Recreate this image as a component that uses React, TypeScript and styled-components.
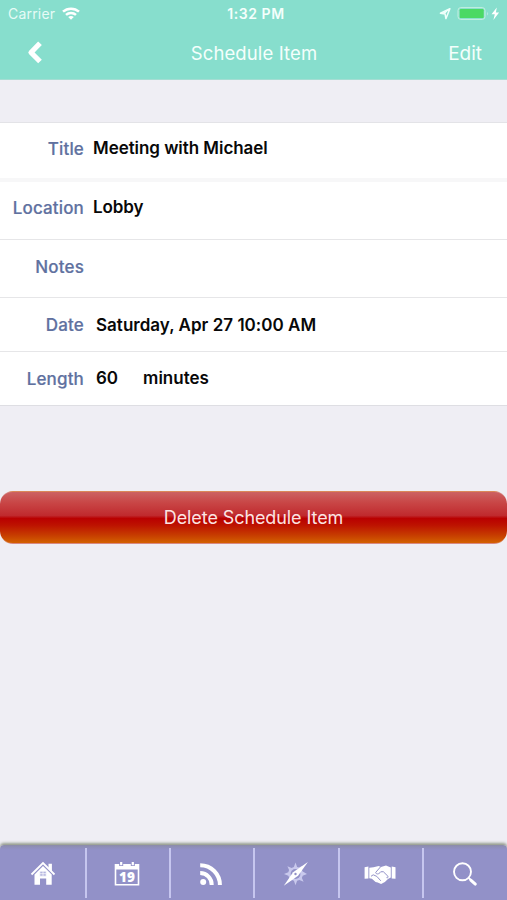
import React from "react";
import styled, { createGlobalStyle } from "styled-components";

const GlobalStyle = createGlobalStyle`
  * { box-sizing: border-box; }
  body { margin: 0; background: #efeef4; }
`;

const Screen = styled.div`
  width: 507px;
  height: 900px;
  display: flex;
  flex-direction: column;
  overflow: hidden;
  background: #efeef4;
  font-family: Inter, "Liberation Sans", sans-serif;
`;

const Header = styled.header`
  height: 80px;
  flex: none;
  background: #87decd;
  color: #f4fffc;
  border-bottom: 1px solid #a5ddd3;
`;

const StatusBar = styled.div`
  height: 27px;
  display: grid;
  grid-template-columns: 1fr auto 1fr;
  align-items: center;
  padding: 0 3px 0 8px;
`;

const Carrier = styled.div`
  display: flex;
  align-items: center;
  gap: 7px;
  font-size: 14px;
  letter-spacing: 0.2px;
  color: #e6fbf6;
`;

const Clock = styled.div`
  font-size: 14px;
  font-weight: 600;
  letter-spacing: 0.55px;
`;

const StatusIcons = styled.div`
  display: flex;
  justify-content: flex-end;
  align-items: center;
`;

const NavBar = styled.div`
  height: 51px;
  display: grid;
  grid-template-columns: 100px 1fr 100px;
  align-items: center;
`;

const BackButton = styled.button`
  border: 0;
  background: none;
  padding: 0 0 0 27px;
  display: flex;
`;

const NavTitle = styled.h1`
  margin: 0 0 0 1px;
  text-align: center;
  font-size: 18.5px;
  font-weight: 400;
  letter-spacing: 0.12px;
`;

const EditButton = styled.button`
  border: 0;
  background: none;
  padding: 2px 25px 0 0;
  text-align: right;
  color: inherit;
  font: inherit;
  font-size: 19px;
`;

const Form = styled.dl`
  margin: 42px 0 0;
  background: #fff;
  border-top: 1px solid #e3e3e7;
  border-bottom: 1px solid #dedee3;
`;

const Row = styled.div<{ $height: number; $divider?: string; $lift?: number }>`
  height: ${(p) => p.$height}px;
  display: flex;
  align-items: center;
  padding-bottom: ${(p) => p.$lift ?? 0}px;
  border-bottom: ${(p) => p.$divider ?? "0"};
`;

const Label = styled.dt`
  width: 84px;
  text-align: right;
  font-size: 17px;
  line-height: 20px;
  font-weight: 500;
  -webkit-text-stroke: 0.2px #60719f;
  color: #60719f;
  letter-spacing: 0.15px;
`;

const Value = styled.dd<{ $gap: number; $spacing?: number; $raise?: number }>`
  margin: 0 0 0 ${(p) => p.$gap}px;
  font-size: 17px;
  line-height: 20px;
  font-weight: 600;
  color: #080808;
  white-space: nowrap;
  padding-bottom: ${(p) => p.$raise ?? 1}px;
  letter-spacing: ${(p) => p.$spacing ?? 0}px;
`;

const Units = styled.span`
  margin-left: 25px;
`;

const DeleteButton = styled.button`
  flex: none;
  margin: 85px 0 0;
  width: 507px;
  height: 53px;
  padding: 0 0 1px;
  border: 1px solid rgba(225, 170, 160, 0.55);
  border-width: 1px 0;
  border-radius: 13px;
  background: linear-gradient(
    to bottom,
    #cc6262 0%,
    #c94747 20%,
    #c02a2e 46%,
    #b90000 52%,
    #bd1200 65%,
    #c63b00 84%,
    #d36100 100%
  );
  color: #fbe4e2;
  font: inherit;
  font-size: 18px;
  letter-spacing: -0.09px;
`;

const TabBar = styled.nav`
  height: 55px;
  flex: none;
  margin-top: auto;
  display: grid;
  grid-template-columns: 87px 84px 84px 85px 84px 83px;
  padding: 3px 0 2px;
  background: linear-gradient(to bottom, #8b8ba8 0, #8e8eb9 2px, #9291c8 5px);
  border-radius: 4px 4px 0 0;
  box-shadow: 0 -2px 3px #92998b;
`;

const Tab = styled.button`
  border: 0;
  border-right: 2px solid #c6c6ef;
  background: none;
  padding: 2px 2px 0 0;
  display: flex;
  align-items: center;
  justify-content: center;
  &:first-child { padding-right: 0; }
  &:last-child { border-right: 0; }
`;

const CalendarText = styled.text`
  font-family: "Open Sans", sans-serif;
  font-size: 13.5px;
  font-weight: 800;
`;

const Wifi = () => (
  <svg width="18" height="13" viewBox="0 0 18 13" fill="none" stroke="#fff" strokeWidth="2.5">
    <path d="M1 4.7C5.5.6 12.5.6 17 4.7M4 7.9c2.8-2.5 7.2-2.5 10 0" />
    <path d="M6.2 9.9c1.7-1.3 3.9-1.3 5.6 0L9 12.8Z" fill="#fff" stroke="none" />
  </svg>
);

const StatusGlyphs = () => (
  <svg width="65" height="16" viewBox="0 0 65 16">
    <path d="M10.9 2.8 1.4 7.2l4.7.9.8 4.5Z" fill="none" stroke="#f0fffb" strokeWidth="1.5" strokeLinejoin="round" />
    <path d="m10.9 2.8-4.8 4.9-4-.3Z" fill="#f0fffb" />
    <rect x="19" y="1.6" width="27" height="11.8" rx="2.8" fill="none" stroke="#c5efe0" />
    <rect x="20.7" y="3.1" width="24" height="9" rx="1.2" fill="#4bd964" />
    <path d="M48 6c1.6.5 1.6 2.9 0 3.4Z" fill="#b5eadc" />
    <path d="m57.8 1.5-5.3 6.8h3.3L54.4 14l5.7-7.5h-3.2Z" fill="#fff" />
  </svg>
);

const HomeIcon = () => (
  <svg width="26" height="26" viewBox="0 0 26 26">
    <path d="M1.5 13.5 13 2l11.5 11.5" fill="none" stroke="#fff" strokeWidth="1.8" />
    <path d="M18.5 2.7h3.4v7.8l-3.4-3.2ZM4.5 13.6 13 5l8.7 8.6v10.1h-5.5v-6.3H10v6.3H4.5Z" fill="#fff" />
    <path d="M9.8 10.2h6.4v5H9.8ZM13 10.2v5M9.8 12.7h6.4" fill="#b4b5df" stroke="#fff" strokeWidth=".7" />
  </svg>
);

const CalendarIcon = () => (
  <svg width="26" height="26" viewBox="0 0 26 26">
    <path d="M.7 3h24.6v21.6H.7ZM2.3 8.5v14.6h21.4V8.5Z" fill="#fff" fillRule="evenodd" />
    <path d="M7.2 2v3.1M18.8 2v3.1" stroke="#9291c8" strokeWidth="4" />
    <path d="M7.2 1v3.3M18.8 1v3.3" stroke="#fff" strokeWidth="2.2" />
    <CalendarText x="13" y="20.8" textAnchor="middle" fill="#fff">19</CalendarText>
  </svg>
);

const FeedIcon = () => (
  <svg width="24" height="24" viewBox="0 0 24 24" fill="none" stroke="#fff" strokeWidth="4">
    <circle cx="4.2" cy="20.1" r="3" fill="#fff" stroke="none" />
    <path d="M1.2 11.1A11.5 11.5 0 0 1 12.7 23M1.2 3.2A19.7 19.7 0 0 1 20.9 23" />
  </svg>
);

const CompassIcon = () => (
  <svg width="26" height="26" viewBox="0 0 26 26">
    <path
      d="m12.5 1.5 1.6 4.5 2 .6 2.9-1.6-.6 3.3 1.3 2.3L24 13l-4.3 1.7-.8 2.2 1.7 3.9-4.2-1.8-2.3.7-1.6 4.5-1.6-4.5-2-.6L5.8 21l.8-3.8-1.3-2.5L1 13l4.3-1.7.8-2.2-1.7-3.9 4.2 1.8 2.3-.9Z"
      fill="#c9c9ed"
    />
    <circle cx="12.5" cy="13" r="4.9" fill="#9291c8" />
    <path d="m24.9 1-9.8 13.8L.8 24.7l9.3-13.4Z" fill="#fff" />
    <circle cx="12.5" cy="13" r="1.2" fill="#9291c8" />
  </svg>
);

const HandshakeIcon = () => (
  <svg width="32" height="22" viewBox="0 0 32 22">
    <path d="M.6 4.2 4.4 3.4v12.1l-3.8.2ZM27.7 3.4l3.8.8v11.5l-3.8-.2Z" fill="#fff" />
    <path d="m5.3 4.8 4.2-.6 5.2-1.1 2.2.9L22 2.5l4.8 2.1v10L24 16l-3.1 3-3.8 2-3.4-1.4-2.1-.7-3.7-3.2-2.6-.4Z" fill="#fff" />
    <path d="m16.7 3.7-5 5.7c.4 2.3 3.3 2 5-.6l2.6-.1 4.6 4.5c.7 1-.5 2.2-1.4 1.4M7 13.3l2.2-1.5 3.6 1.6 4 4.4" fill="none" stroke="#9291c8" strokeWidth="1" />
  </svg>
);

const SearchIcon = () => (
  <svg width="26" height="26" viewBox="0 0 26 26" fill="none" stroke="#fff">
    <circle cx="10.5" cy="10.8" r="8.5" strokeWidth="1.9" />
    <path d="m16.8 17 2.2 2.2" strokeWidth="1.8" />
    <path d="m18.8 19.1 4.5 4" strokeWidth="3" strokeLinecap="round" />
  </svg>
);

const tabs = [
  { name: "Home", Icon: HomeIcon },
  { name: "Calendar", Icon: CalendarIcon },
  { name: "Feed", Icon: FeedIcon },
  { name: "Explore", Icon: CompassIcon },
  { name: "Meetings", Icon: HandshakeIcon },
  { name: "Search", Icon: SearchIcon },
];

export default function App() {
  return (
    <>
      <GlobalStyle />
      <Screen>
        <Header>
          <StatusBar>
            <Carrier>Carrier <Wifi /></Carrier>
            <Clock>1:32 PM</Clock>
            <StatusIcons><StatusGlyphs /></StatusIcons>
          </StatusBar>
          <NavBar>
            <BackButton aria-label="Back">
              <svg width="16" height="24" viewBox="0 0 16 24" fill="none" stroke="#fff" strokeWidth="5.2" strokeLinejoin="round">
                <path d="M13 2.3 4 11.5l9 9" />
              </svg>
            </BackButton>
            <NavTitle>Schedule Item</NavTitle>
            <EditButton>Edit</EditButton>
          </NavBar>
        </Header>
        <Form>
          <Row $height={59} $divider="4px solid #f7f7f8" $lift={4}>
            <Label>Title</Label>
            <Value $gap={9} $spacing={-0.05}>Meeting with Michael</Value>
          </Row>
          <Row $height={58} $divider="1px solid #e6e6e8" $lift={6}>
            <Label>Location</Label>
            <Value $gap={9} $spacing={-0.1}>Lobby</Value>
          </Row>
          <Row $height={58} $divider="1px solid #e6e6e8" $lift={4}>
            <Label>Notes</Label>
          </Row>
          <Row $height={54} $divider="1px solid #e6e6e8">
            <Label>Date</Label>
            <Value $gap={12} $raise={0} $spacing={0.02}>Saturday, Apr 27 10:00 AM</Value>
          </Row>
          <Row $height={53}>
            <Label>Length</Label>
            <Value $gap={12}>60<Units>minutes</Units></Value>
          </Row>
        </Form>
        <DeleteButton>Delete Schedule Item</DeleteButton>
        <TabBar>
          {tabs.map(({ name, Icon }) => (
            <Tab key={name} aria-label={name}><Icon /></Tab>
          ))}
        </TabBar>
      </Screen>
    </>
  );
}
